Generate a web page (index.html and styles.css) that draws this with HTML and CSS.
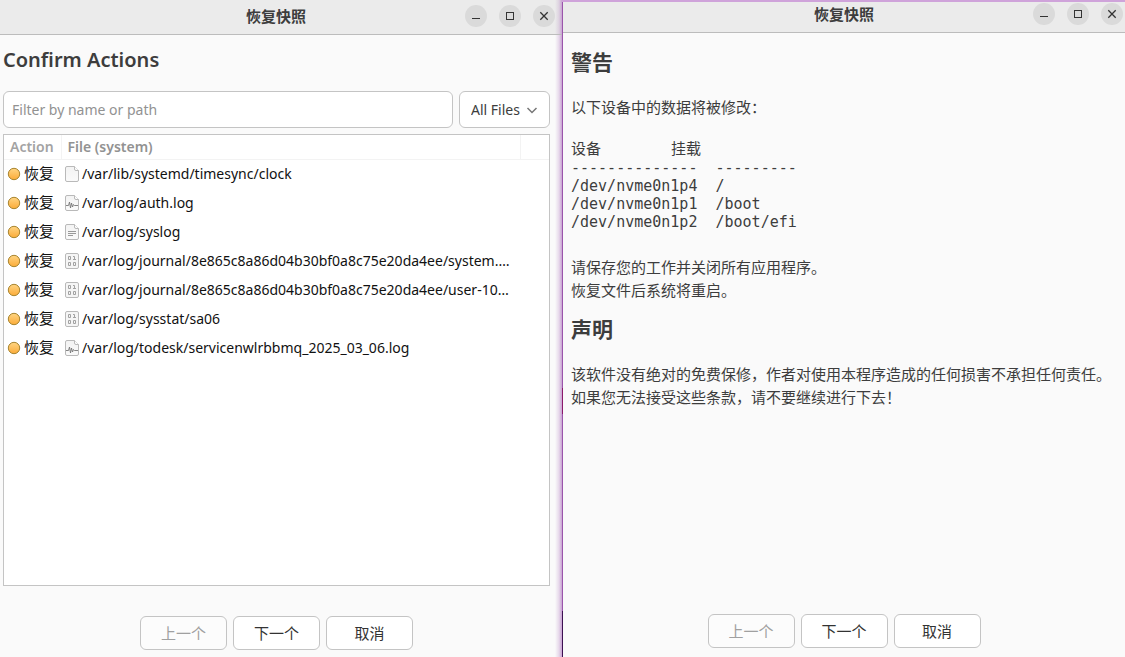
FILE: index.html
```html
<!DOCTYPE html>
<html lang="zh-CN">
<head>
<meta charset="utf-8">
<title>恢复快照</title>
<link rel="stylesheet" href="styles.css">
</head>
<body class="desktop">
<svg class="symbols" aria-hidden="true">
  <defs>
    <linearGradient id="amber" x1="0" y1="0" x2="0" y2="1"><stop offset="0" stop-color="#ffd583"/><stop offset="1" stop-color="#fbab38"/></linearGradient>
    <linearGradient id="paper" x1="0" y1="0" x2="0" y2="1"><stop offset="0" stop-color="#f3f3f3"/><stop offset="1" stop-color="#fafafa"/></linearGradient>
    <symbol id="dot" viewBox="0 0 14 14"><circle cx="7" cy="7" r="5.7" fill="url(#amber)" stroke="#a8852f"/></symbol>
    <symbol id="page" viewBox="0 0 16 16"><path d="M3 .5h7.5l4 4V14a1.5 1.5 0 0 1-1.5 1.5H3A1.5 1.5 0 0 1 1.5 14V2A1.5 1.5 0 0 1 3 .5z" fill="url(#paper)" stroke="#b9b9b9"/><path d="M10.5 .5V3a1.5 1.5 0 0 0 1.5 1.5h2.5" fill="#fff" stroke="#b9b9b9"/></symbol>
    <symbol id="log" viewBox="0 0 16 16"><use href="#page"/><path d="M2 10.5h2.500l1-3.500 1 6 1-5 1 4 1-2.500 1 1H14" fill="none" stroke="#777" stroke-width=".9"/></symbol>
    <symbol id="text" viewBox="0 0 16 16"><use href="#page"/><path d="M4 7.5h8M4 9.5h8M4 11.5h5" stroke="#999"/></symbol>
    <symbol id="binary" viewBox="0 0 16 16"><rect x="1.5" y=".5" width="13" height="15" rx="1.5" fill="#f5f5f5" stroke="#b9b9b9"/><path d="M4.5 3.5h2v3h-2zM4.5 9.5h2v3h-2zM9.5 9.5h2v3h-2zM9 3.5h1.5v3M9 6.5h3" fill="none" stroke="#a2a2a2"/></symbol>
    <symbol id="min" viewBox="0 0 22 22"><path d="M7 13.5h8" stroke="#333"/></symbol>
    <symbol id="max" viewBox="0 0 22 22"><rect x="7.5" y="7.5" width="7" height="7" fill="none" stroke="#333"/></symbol>
    <symbol id="close" viewBox="0 0 22 22"><path d="M7.3 7.3l7.4 7.4M14.7 7.3l-7.4 7.4" stroke="#333" stroke-width="1.3"/></symbol>
  </defs>
</svg>

<main class="window window-actions">
  <header class="titlebar">
    <strong class="title">恢复快照</strong>
    <div class="controls">
      <button class="control" aria-label="最小化"><svg><use href="#min"/></svg></button>
      <button class="control" aria-label="最大化"><svg><use href="#max"/></svg></button>
      <button class="control" aria-label="关闭"><svg><use href="#close"/></svg></button>
    </div>
  </header>
  <section class="content">
    <h1 class="heading">Confirm Actions</h1>
    <div class="filters">
      <input class="search" type="text" placeholder="Filter by name or path" aria-label="Filter by name or path">
      <div class="picker">
        <select class="select" aria-label="File filter"><option>All Files</option></select>
        <svg class="chevron" viewBox="0 0 12 12"><path d="M1.5 4L6 8.5 10.5 4" fill="none" stroke="#777" stroke-width="1.5"/></svg>
      </div>
    </div>
    <div class="list">
      <table class="files">
        <colgroup><col class="col-action"><col><col class="col-rest"></colgroup>
        <thead><tr><th>Action</th><th>File (system)</th><th></th></tr></thead>
        <tbody>
          <tr><td><span class="cell"><svg class="dot"><use href="#dot"/></svg>恢复</span></td><td colspan="2"><span class="cell"><svg class="icon"><use href="#page"/></svg>/var/lib/systemd/timesync/clock</span></td></tr>
          <tr><td><span class="cell"><svg class="dot"><use href="#dot"/></svg>恢复</span></td><td colspan="2"><span class="cell"><svg class="icon"><use href="#log"/></svg>/var/log/auth.log</span></td></tr>
          <tr><td><span class="cell"><svg class="dot"><use href="#dot"/></svg>恢复</span></td><td colspan="2"><span class="cell"><svg class="icon"><use href="#text"/></svg>/var/log/syslog</span></td></tr>
          <tr><td><span class="cell"><svg class="dot"><use href="#dot"/></svg>恢复</span></td><td colspan="2"><span class="cell"><svg class="icon"><use href="#binary"/></svg>/var/log/journal/8e865c8a86d04b30bf0a8c75e20da4ee/system.…</span></td></tr>
          <tr><td><span class="cell"><svg class="dot"><use href="#dot"/></svg>恢复</span></td><td colspan="2"><span class="cell"><svg class="icon"><use href="#binary"/></svg>/var/log/journal/8e865c8a86d04b30bf0a8c75e20da4ee/user-10…</span></td></tr>
          <tr><td><span class="cell"><svg class="dot"><use href="#dot"/></svg>恢复</span></td><td colspan="2"><span class="cell"><svg class="icon"><use href="#binary"/></svg>/var/log/sysstat/sa06</span></td></tr>
          <tr><td><span class="cell"><svg class="dot"><use href="#dot"/></svg>恢复</span></td><td colspan="2"><span class="cell"><svg class="icon"><use href="#log"/></svg>/var/log/todesk/servicenwlrbbmq_2025_03_06.log</span></td></tr>
        </tbody>
      </table>
    </div>
  </section>
  <footer class="footer">
    <button class="button" disabled>上一个</button>
    <button class="button">下一个</button>
    <button class="button">取消</button>
  </footer>
</main>

<aside class="window window-warning">
  <header class="titlebar">
    <strong class="title">恢复快照</strong>
    <div class="controls">
      <button class="control" aria-label="最小化"><svg><use href="#min"/></svg></button>
      <button class="control" aria-label="最大化"><svg><use href="#max"/></svg></button>
      <button class="control" aria-label="关闭"><svg><use href="#close"/></svg></button>
    </div>
  </header>
  <section class="notice">
    <h2 class="subheading">警告</h2>
    <p class="text">以下设备中的数据将被修改：</p>
    <div class="devices">
      <div class="device-head"><span>设备</span><span>挂载</span></div>
      <pre class="device-rows">--------------  ---------
/dev/nvme0n1p4  /
/dev/nvme0n1p1  /boot
/dev/nvme0n1p2  /boot/efi</pre>
    </div>
    <p class="text">请保存您的工作并关闭所有应用程序。<br>恢复文件后系统将重启。</p>
    <h2 class="subheading">声明</h2>
    <p class="text">该软件没有绝对的免费保修，作者对使用本程序造成的任何损害不承担任何责任。<br>如果您无法接受这些条款，请不要继续进行下去！</p>
  </section>
  <footer class="footer">
    <button class="button" disabled>上一个</button>
    <button class="button">下一个</button>
    <button class="button">取消</button>
  </footer>
</aside>
</body>
</html>
```
FILE: styles.css
```css
* { box-sizing: border-box; }

.desktop {
  margin: 0;
  min-height: 100vh;
  display: grid;
  grid-template-columns: minmax(0, 562fr) minmax(0, 563fr);
  background: #fafafa;
  color: #3d3d3d;
  font: 15px/23px "Noto Sans", "Noto Sans CJK SC", sans-serif;
}

.symbols { position: absolute; width: 0; height: 0; }

.window { display: flex; flex-direction: column; background: #fafafa; }
.window-actions {
  background: linear-gradient(to left, #c9a3d3, #e6d8ea 3px, #fafafa00 7px), #fafafa;
}
.window-warning {
  border-top: 2px solid #cfa3da;
  border-left: 1px solid;
  border-image: linear-gradient(#cfa3da 2px, #9a55ab 2px, #9a55ab 59%, #8b1a6b 59%, #8b1a6b 63%, #9a55ab 63%, #9a55ab 93%, #3d1152 93%) 2 0 0 1;
}

.titlebar {
  display: grid;
  grid-template-columns: 1fr auto 1fr;
  align-items: center;
  height: 35px;
  padding: 0 10px 2px 0;
  border-bottom: 1px solid #bcbcbc;
  background: linear-gradient(to left, #c9a3d3, #ddd2e0 3px, #ebebeb00 7px), #ebebeb;
}
.window-warning .titlebar { height: 31px; padding: 0 0 6px; background: #ebebeb; }
.title { grid-column: 2; font-size: 15px; font-weight: 700; line-height: 22px; }
.controls { display: flex; justify-content: flex-end; gap: 12px; margin-right: -3px; }
.window-warning .controls { margin-right: 2px; }
.control {
  width: 22px;
  height: 22px;
  padding: 0;
  border: 0;
  border-radius: 50%;
  background: #dadada;
}
.control svg { display: block; width: 22px; height: 22px; }

.content { flex: 1; display: flex; flex-direction: column; padding: 11px 12px 0 3px; }
.heading { margin: 0 0 17px; font: 600 20px/28px "Noto Sans", sans-serif; }
.filters { display: flex; gap: 6px; margin-bottom: 6px; }
.search {
  flex: 1;
  min-width: 0;
  height: 37px;
  padding: 0 8px;
  border: 1px solid #c4c4c4;
  border-radius: 6px;
  background: #fff;
  font: 14px/20px "Noto Sans", sans-serif;
}
.search::placeholder { color: #929292; }
.picker { display: grid; width: 91px; }
.select {
  grid-area: 1 / 1;
  appearance: none;
  height: 37px;
  padding: 0 11px;
  border: 1px solid #c4c4c4;
  border-radius: 6px;
  background: #fff;
  color: #3d3d3d;
  font: 14px/20px "Noto Sans", sans-serif;
}
.chevron {
  grid-area: 1 / 1;
  place-self: center end;
  width: 12px;
  height: 12px;
  margin-right: 12px;
  pointer-events: none;
}

.list { flex: 1; border: 1px solid #c4c4c4; background: #fff; }
.files { width: 100%; table-layout: fixed; border-collapse: collapse; color: #111; }
.col-action { width: 57px; }
.col-rest { width: 29px; }
.files th {
  height: 24px;
  padding: 0 6px;
  border-right: 1px solid #f3f3f3;
  border-bottom: 1px solid #f3f3f3;
  color: #929292;
  font: 600 14px/22px "Noto Sans", sans-serif;
  text-align: left;
}
.files th:first-child { color: #a3a3a3; }
.files th:last-child { border-right: 0; }
.files td { height: 29px; padding: 0 3px; }
.cell {
  display: flex;
  align-items: center;
  gap: 3px;
  white-space: nowrap;
  font-size: 15px;
}
td + td .cell { gap: 2px; font-size: 14px; }
.dot { width: 14px; height: 14px; }
.icon { width: 16px; height: 16px; }

.footer { display: flex; justify-content: center; gap: 6px; padding: 30px 12px 7px 3px; }
.window-warning .footer { padding: 30px 0 9px; }
.button {
  width: 87px;
  height: 34px;
  padding: 0;
  border: 1px solid #c4c4c4;
  border-radius: 6px;
  background: #fff;
  color: #333;
  font: 15px/22px "Noto Sans CJK SC", sans-serif;
}
.button:disabled { background: #fcfcfc; color: #a0a0a0; }

.notice { flex: 1; padding: 13px 8px 0; font-family: "Noto Sans CJK SC", sans-serif; }
.subheading { margin: 0 0 19px; font-size: 21px; line-height: 30px; font-weight: 700; }
.text { margin: 0 0 12px; }
.devices { margin: 18px 0 24px; }
.device-head { display: flex; gap: 70px; }
.device-rows { margin: 0; font: 15px/18px "DejaVu Sans Mono", monospace; }
```
